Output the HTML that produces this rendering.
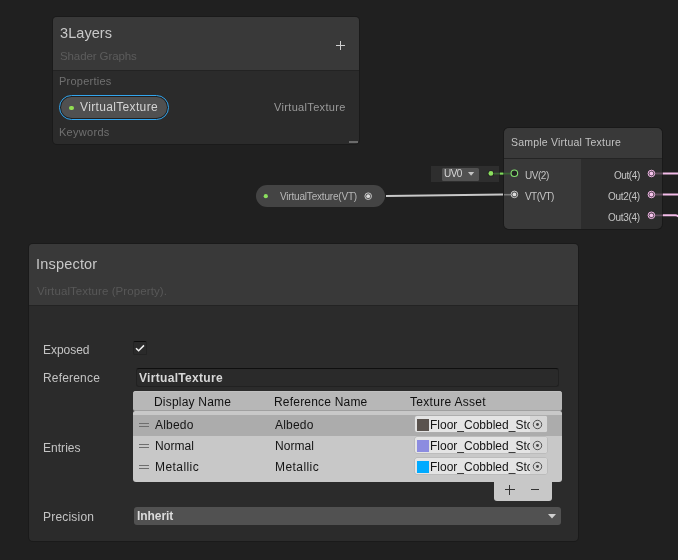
<!DOCTYPE html>
<html><head><meta charset="utf-8">
<style>
*{box-sizing:border-box;margin:0;padding:0}
html,body{width:678px;height:560px;overflow:hidden;background:#202020}
body{font-family:"Liberation Sans",sans-serif;position:relative;color:#c4c4c4}
.a{position:absolute;white-space:nowrap;line-height:1}
.t,.of{will-change:transform}
.t{position:absolute;white-space:nowrap;line-height:1;transform-origin:0 0}
</style></head><body>

<!-- Blackboard -->
<div class="a" id="bb" style="left:53px;top:17px;width:306px;height:127px;background:#2b2b2b;border-radius:4px;overflow:hidden;box-shadow:0 0 0 1px #1a1a1a">
  <div class="a" style="left:0;top:0;width:306px;height:54px;background:#393939;border-bottom:1px solid #232323"></div>
</div>
<div class="t" id="t_3l" style="letter-spacing:0.072px;left:59.7px;top:25.8px;font-size:14.5px;color:#c8c8c8">3Layers</div>
<div class="t" id="t_sg" style="letter-spacing:-0.100px;left:59.7px;top:50.5px;font-size:11.5px;color:#5c5c5c">Shader Graphs</div>
<div class="t" id="t_pr" style="letter-spacing:0.246px;left:58.7px;top:75.9px;font-size:11px;color:#707070">Properties</div>
<div class="t" id="t_kw" style="letter-spacing:0.288px;left:58.7px;top:126.6px;font-size:11px;color:#707070">Keywords</div>
<div class="t" id="t_vr" style="letter-spacing:0.331px;left:273.5px;top:101.7px;font-size:11px;color:#9a9a9a">VirtualTexture</div>
<!-- plus -->
<div class="a" style="left:336px;top:44.8px;width:9px;height:1.4px;background:#d0d0d0"></div>
<div class="a" style="left:339.8px;top:41px;width:1.4px;height:9px;background:#d0d0d0"></div>
<!-- pill -->
<div class="a" style="left:59px;top:95px;width:110px;height:25px;border-radius:12.5px;border:1.3px solid #34a6ee;background:#1f1f1f"></div>
<div class="a" style="left:61px;top:97px;width:106px;height:21px;border-radius:10.5px;background:#505050"></div>
<div class="a" style="left:69.4px;top:105.8px;width:4.6px;height:4.6px;border-radius:50%;background:#93e052"></div>
<div class="t" id="t_vp" style="letter-spacing:0.346px;left:79.5px;top:100.9px;font-size:12px;color:#d4d4d4">VirtualTexture</div>
<!-- resize handle -->
<div class="a" style="left:349px;top:141px;width:9px;height:2px;background:#6a6a6a"></div>

<!-- Property node pill -->
<div class="a" style="left:256px;top:185px;width:129px;height:22px;border-radius:11px;background:#444"></div>
<div class="t" id="t_vt" style="letter-spacing:-0.189px;left:279.8px;top:192.4px;font-size:10px;color:#b8b8b8">VirtualTexture(VT)</div>

<!-- UV0 container -->
<div class="a" style="left:431px;top:166px;width:68px;height:16px;background:#2e2e2e"></div>
<div class="a" style="left:441.5px;top:167.5px;width:37px;height:13px;background:#515151;border-radius:1.5px"></div>
<div class="t" id="t_uv0" style="letter-spacing:-0.551px;left:444.2px;top:168.8px;font-size:10px;color:#d8d8d8">UV0</div>
<svg class="a" style="left:467.7px;top:172px" width="7" height="4"><path d="M0 0H6.2L3.1 3.7Z" fill="#c4c4c4"/></svg>

<!-- Sample VT node -->
<div class="a" style="left:504px;top:127.5px;width:158px;height:101.5px;background:#2d2d2d;border-radius:5px;overflow:hidden;box-shadow:0 0 0 1px #191919">
  <div class="a" style="left:0;top:0;width:159px;height:31px;background:#393939;border-bottom:1px solid #242424"></div>
  <div class="a" style="left:0;top:31px;width:76.8px;height:71px;background:#393939"></div>
</div>
<div class="t" id="t_sv" style="letter-spacing:0.215px;left:511px;top:137.3px;font-size:10.5px;color:#c2c2c2">Sample Virtual Texture</div>
<div class="t" id="t_uv" style="letter-spacing:-0.465px;left:525px;top:170.6px;font-size:10px;color:#c4c4c4">UV(2)</div>
<div class="t" id="t_vv" style="letter-spacing:-0.570px;left:525px;top:191.6px;font-size:10px;color:#c4c4c4">VT(VT)</div>
<div class="t" id="t_o1" style="letter-spacing:-0.424px;right:38px;top:170.6px;font-size:10px;color:#c4c4c4;transform-origin:100% 0">Out(4)</div>
<div class="t" id="t_o2" style="letter-spacing:-0.287px;right:38px;top:191.6px;font-size:10px;color:#c4c4c4;transform-origin:100% 0">Out2(4)</div>
<div class="t" id="t_o3" style="letter-spacing:-0.287px;right:38px;top:212.6px;font-size:10px;color:#c4c4c4;transform-origin:100% 0">Out3(4)</div>
<!-- ports -->
<svg class="a" style="left:0;top:0" width="678" height="560">
  <!-- property edge -->
  <path d="M386 196 L503 194.5" stroke="#c8c8c8" stroke-width="2" fill="none"/>
  <path d="M504 194.7H511" stroke="#7c7c7c" stroke-width="1.6" fill="none"/>
  <!-- property node -->
  <circle cx="265.8" cy="196.2" r="2.1" fill="#8be05e"/>
  <circle cx="368.2" cy="196.2" r="3.3" fill="#4a4a4a" stroke="#c4c4c4" stroke-width="1"/>
  <circle cx="368.2" cy="196.2" r="1.9" fill="#dcdcdc"/>
  <!-- uv0 -->
  <path d="M493 173.6H511" stroke="#3a6235" stroke-width="1.8" fill="none"/>
  <path d="M500 173.6H503.2" stroke="#7fd85a" stroke-width="2" fill="none"/>
  <circle cx="490.9" cy="173.4" r="3.2" fill="#242424"/>
  <circle cx="490.9" cy="173.4" r="2.4" fill="#8be05e"/>
  <!-- in ports -->
  <circle cx="514.35" cy="173.25" r="3.3" fill="#222" stroke="#84e070" stroke-width="1.1"/>
  <circle cx="514.4" cy="194.4" r="3.3" fill="#444" stroke="#c4c4c4" stroke-width="1"/>
  <circle cx="514.4" cy="194.4" r="1.9" fill="#dcdcdc"/>
  <!-- out ports -->
  <path d="M655 173.5H663M655 194.5H663M655 215.3H663" stroke="#5e4d5b" stroke-width="1.8" fill="none"/>
  <g fill="#4a3b48" stroke="#f0b6e5" stroke-width="1">
    <circle cx="651.4" cy="173.5" r="3.3"/><circle cx="651.4" cy="194.5" r="3.3"/><circle cx="651.4" cy="215.3" r="3.3"/>
  </g>
  <g fill="#f6c4ec"><circle cx="651.4" cy="173.5" r="1.9"/><circle cx="651.4" cy="194.5" r="1.9"/><circle cx="651.4" cy="215.3" r="1.9"/></g>
  <path d="M663 173.5H678" stroke="#f4bde9" stroke-width="2" fill="none"/>
  <path d="M663 194.5H678" stroke="#f4bde9" stroke-width="2" fill="none"/>
  <path d="M663 215.3H675.5 Q677.5 215.5 678.5 216.6" stroke="#f4bde9" stroke-width="2" fill="none"/>
</svg>

<!-- Inspector -->
<div class="a" id="insp" style="left:29px;top:244px;width:549px;height:297px;background:#2b2b2b;border-radius:4px;overflow:hidden;box-shadow:0 0 0 1px #1a1a1a">
  <div class="a" style="left:0;top:0;width:549px;height:62px;background:#393939;border-bottom:1px solid #232323"></div>
</div>
<div class="t" id="t_in" style="letter-spacing:0.194px;left:35.6px;top:257.1px;font-size:14.5px;color:#c8c8c8">Inspector</div>
<div class="t" id="t_vprop" style="letter-spacing:0.091px;left:36.5px;top:285.5px;font-size:11.5px;color:#585858">VirtualTexture (Property).</div>
<div class="t" id="t_ex" style="letter-spacing:-0.043px;left:42.6px;top:343.9px;font-size:12px;color:#c4c4c4">Exposed</div>
<div class="t" id="t_re" style="letter-spacing:0.181px;left:42.6px;top:371.8px;font-size:12px;color:#c4c4c4">Reference</div>
<div class="t" id="t_en" style="letter-spacing:0.034px;left:42.6px;top:441.9px;font-size:12px;color:#c4c4c4">Entries</div>
<div class="t" id="t_pc" style="letter-spacing:0.205px;left:42.6px;top:510.6px;font-size:12px;color:#c4c4c4">Precision</div>
<!-- checkbox -->
<div class="a" style="left:133px;top:341px;width:14px;height:14px;background:#2a2a2a;border:1px solid #232323;border-top-color:#0d0d0d;border-radius:2px"></div>
<svg class="a" style="left:133px;top:341px" width="14" height="14"><path d="M3 7.2L5.6 9.7L11 4.4" stroke="#f2f2f2" stroke-width="1.5" fill="none"/></svg>
<!-- reference field -->
<div class="a" style="left:136px;top:368px;width:422.5px;height:19px;background:#2a2a2a;border:1px solid #212121;border-top-color:#0f0f0f;border-radius:3px"></div>
<div class="t" id="t_rv" style="letter-spacing:0.315px;left:139px;top:371.7px;font-size:12px;font-weight:bold;color:#d8d8d8">VirtualTexture</div>
<!-- list -->
<div class="a" style="left:133px;top:391px;width:429px;height:20px;background:#b7b7b7;border-radius:3px 3px 2px 2px;border-bottom:1px solid #a0a0a0;box-shadow:inset 0 1px 0 #c0c0c0"></div>
<div class="a" style="left:133px;top:410.6px;width:429px;height:71px;background:#c8c8c8;border-radius:2px 2px 3px 3px;overflow:hidden">
  <div class="a" style="left:0;top:4.3px;width:429px;height:20.8px;background:#acacac"></div>
</div>
<div class="t" id="t_h1" style="letter-spacing:0.208px;left:153.7px;top:395.6px;font-size:12px;color:#101010">Display Name</div>
<div class="t" id="t_h2" style="letter-spacing:0.199px;left:273.5px;top:395.6px;font-size:12px;color:#101010">Reference Name</div>
<div class="t" id="t_h3" style="letter-spacing:0.304px;left:410px;top:395.6px;font-size:12px;color:#101010">Texture Asset</div>
<div class="t" id="t_a1" style="letter-spacing:0.204px;left:155.4px;top:419px;font-size:12px;color:#151515">Albedo</div>
<div class="t" id="t_n1" style="letter-spacing:0.071px;left:155.4px;top:440px;font-size:12px;color:#151515">Normal</div>
<div class="t" id="t_m1" style="letter-spacing:0.427px;left:155.4px;top:461px;font-size:12px;color:#151515">Metallic</div>
<div class="t" id="t_a2" style="letter-spacing:0.204px;left:274.9px;top:419px;font-size:12px;color:#151515">Albedo</div>
<div class="t" id="t_n2" style="letter-spacing:0.071px;left:274.9px;top:440px;font-size:12px;color:#151515">Normal</div>
<div class="t" id="t_m2" style="letter-spacing:0.427px;left:274.9px;top:461px;font-size:12px;color:#151515">Metallic</div>
<!-- handles -->
<div class="a" style="left:139px;top:423px;width:10px;height:1px;background:#6e6e6e"></div>
<div class="a" style="left:139px;top:426px;width:10px;height:1px;background:#6e6e6e"></div>
<div class="a" style="left:139px;top:444px;width:10px;height:1px;background:#6e6e6e"></div>
<div class="a" style="left:139px;top:447px;width:10px;height:1px;background:#6e6e6e"></div>
<div class="a" style="left:139px;top:465px;width:10px;height:1px;background:#6e6e6e"></div>
<div class="a" style="left:139px;top:468px;width:10px;height:1px;background:#6e6e6e"></div>
<!-- object fields -->
<div class="a" style="left:414.5px;top:416px;width:132.3px;height:16px;background:#e4e4e4;border-radius:2px;overflow:hidden;box-shadow:0 0 0 0.5px #b0b0b0">
  <div class="a" style="left:2.5px;top:3.1px;width:11.8px;height:11.8px;background:#5a534e"></div>
  <div class="a of" style="left:15.6px;top:2.8px;font-size:12px;color:#151515">Floor_Cobbled_Stone</div>
  <div class="a" style="left:115px;top:0;width:18px;height:16px;background:#d6d6d6"></div>
  <svg class="a" style="left:117.8px;top:2.5px" width="11" height="11"><circle cx="5.5" cy="5.5" r="4.2" stroke="#454545" stroke-width="0.9" fill="none"/><circle cx="5.5" cy="5.5" r="1.4" fill="#454545"/></svg>
</div>
<div class="a" style="left:414.5px;top:437px;width:132.3px;height:16px;background:#e4e4e4;border-radius:2px;overflow:hidden;box-shadow:0 0 0 0.5px #b0b0b0">
  <div class="a" style="left:2.5px;top:3.1px;width:11.8px;height:11.8px;background:#8c8ce0"></div>
  <div class="a of" style="left:15.6px;top:2.8px;font-size:12px;color:#151515">Floor_Cobbled_Stone</div>
  <div class="a" style="left:115px;top:0;width:18px;height:16px;background:#d6d6d6"></div>
  <svg class="a" style="left:117.8px;top:2.5px" width="11" height="11"><circle cx="5.5" cy="5.5" r="4.2" stroke="#454545" stroke-width="0.9" fill="none"/><circle cx="5.5" cy="5.5" r="1.4" fill="#454545"/></svg>
</div>
<div class="a" style="left:414.5px;top:458px;width:132.3px;height:16px;background:#e4e4e4;border-radius:2px;overflow:hidden;box-shadow:0 0 0 0.5px #b0b0b0">
  <div class="a" style="left:2.5px;top:3.1px;width:11.8px;height:11.8px;background:#00aaff"></div>
  <div class="a of" style="left:15.6px;top:2.8px;font-size:12px;color:#151515">Floor_Cobbled_Stone</div>
  <div class="a" style="left:115px;top:0;width:18px;height:16px;background:#d6d6d6"></div>
  <svg class="a" style="left:117.8px;top:2.5px" width="11" height="11"><circle cx="5.5" cy="5.5" r="4.2" stroke="#454545" stroke-width="0.9" fill="none"/><circle cx="5.5" cy="5.5" r="1.4" fill="#454545"/></svg>
</div>

<!-- footer -->
<div class="a" style="left:494px;top:481px;width:57.7px;height:19.6px;background:#c8c8c8;border-radius:0 0 3px 3px"></div>
<div class="a" style="left:505px;top:489.3px;width:10px;height:1.2px;background:#333"></div>
<div class="a" style="left:509.3px;top:485px;width:1.2px;height:10px;background:#333"></div>
<div class="a" style="left:531px;top:489.3px;width:8px;height:1.2px;background:#333"></div>
<!-- precision -->
<div class="a" style="left:133.5px;top:507px;width:427.5px;height:18px;background:#515151;border-radius:3px"></div>
<div class="t" id="t_ih" style="letter-spacing:-0.067px;left:136.8px;top:509.6px;font-size:12px;font-weight:bold;color:#dcdcdc">Inherit</div>
<svg class="a" style="left:548.3px;top:514px" width="8" height="5"><path d="M0 0H8L4 4.6Z" fill="#d0d0d0"/></svg>
</body></html>
